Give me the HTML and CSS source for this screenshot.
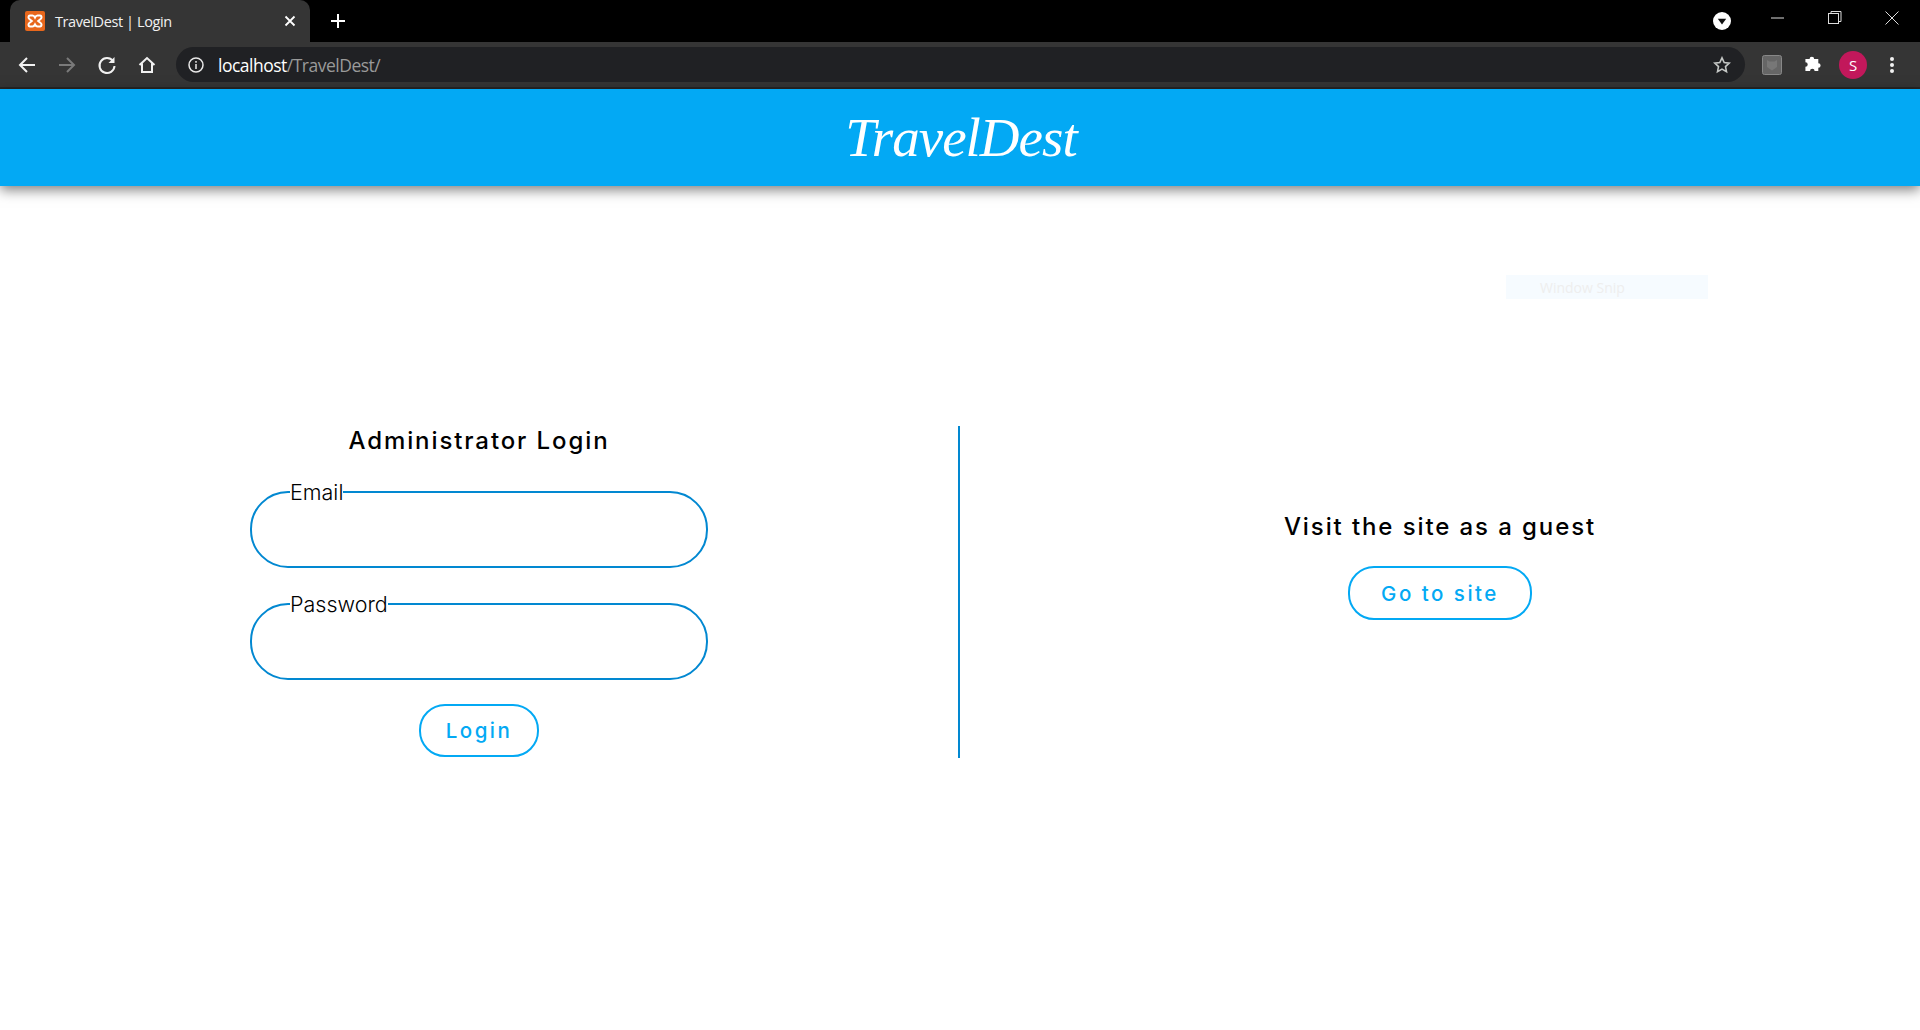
FILE: index.html

```html
<!DOCTYPE html>
<html lang="en">
<head>
    <meta charset="UTF-8">
    <title>TravelDest | Login</title>
    <meta name="viewport" content="width=device-width, initial-scale=1.0">
    <link rel="stylesheet" href="styles.css">
</head>
<body>
    <div class="browser">
        <div class="tabstrip">
            <div class="tab">
                <svg class="favicon" width="20" height="20" viewBox="0 0 20 20">
                    <rect width="20" height="20" rx="2" fill="#e8671c"/>
                    <path d="M5 4.500h2.500c1.300 0 2 1 2.500 2 .5-1 1.200-2 2.500-2H15c1 0 1.500 1 1.500 2s-.7 1.500-1.500 2l-1.800 1.500 1.800 1.500c.8.5 1.500 1 1.500 2s-.5 2-1.500 2h-2.500c-1.300 0-2-1-2.500-2-.5 1-1.200 2-2.500 2H5c-1 0-1.500-1-1.500-2s.7-1.500 1.500-2l1.800-1.500L5 8.500c-.8-.5-1.500-1-1.500-2s.5-2 1.500-2z" fill="none" stroke="#fff" stroke-width="2"/>
                </svg>
                <span class="tab-title">TravelDest | Login</span>
                <svg class="tab-close" width="12" height="12" viewBox="0 0 12 12">
                    <path d="M1.500 1.500l9 9M10.500 1.500l-9 9" stroke="#fff" stroke-width="1.800"/>
                </svg>
            </div>
            <svg class="new-tab" width="16" height="16" viewBox="0 0 16 16">
                <path d="M8 1v14M1 8h14" stroke="#fff" stroke-width="2"/>
            </svg>
            <div class="strip-right">
                <div class="tab-search">
                    <svg width="18" height="18" viewBox="0 0 18 18">
                        <circle cx="9" cy="9" r="9" fill="#fff"/>
                        <path d="M4.800 6.800h8.400L9 12.500z" fill="#111"/>
                    </svg>
                </div>
                <div class="win-btn">
                    <svg width="14" height="14" viewBox="0 0 14 14"><path d="M0 7h13" stroke="#ddd" stroke-width="1"/></svg>
                </div>
                <div class="win-btn">
                    <svg width="14" height="14" viewBox="0 0 14 14" fill="none" stroke="#ddd" stroke-width="1"><rect x=".5" y="2.500" width="10" height="10"/><path d="M3 2.500V.5h10v10h-2.500"/></svg>
                </div>
                <div class="win-btn">
                    <svg width="14" height="14" viewBox="0 0 14 14"><path d="M.5.5l13 13M13.500.5l-13 13" stroke="#ddd" stroke-width="1"/></svg>
                </div>
            </div>
        </div>
        <div class="toolbar">
            <svg class="tool" width="20" height="20" viewBox="0 0 20 20" fill="none" stroke="#f1f1f1" stroke-width="2"><path d="M18 10H3M10 3l-7 7 7 7"/></svg>
            <svg class="tool" width="20" height="20" viewBox="0 0 20 20" fill="none" stroke="#7a7a7a" stroke-width="2"><path d="M2 10h15M10 3l7 7-7 7"/></svg>
            <svg class="tool" width="20" height="20" viewBox="0 0 20 20" fill="none" stroke="#f1f1f1" stroke-width="2"><path d="M16 6a7.500 7.500 0 1 0 1.500 5"/><path d="M17.500 2v6h-6" fill="#f1f1f1" stroke="none"/></svg>
            <svg class="tool" width="20" height="20" viewBox="0 0 20 20" fill="none" stroke="#f1f1f1" stroke-width="2"><path d="M2.500 10L10 3l7.500 7M5 8.500V17h10V8.500"/></svg>
            <div class="omnibox">
                <svg width="16" height="16" viewBox="0 0 16 16" fill="none" stroke="#e8e8e8" stroke-width="1.500"><circle cx="8" cy="8" r="7"/><path d="M8 7v5M8 4v1.800"/></svg>
                <span class="url"><span class="url-host">localhost</span>/TravelDest/</span>
                <svg class="star" width="18" height="18" viewBox="0 0 18 18" fill="none" stroke="#c4c7c5" stroke-width="1.600"><path d="M9 1.800l2.200 4.700 5 .6-3.700 3.500 1 5L9 13.100l-4.500 2.500 1-5L1.800 7.100l5-.6z"/></svg>
            </div>
            <div class="toolbar-right">
                <svg class="ext-icon" width="20" height="20" viewBox="0 0 20 20">
                    <rect x=".5" y=".5" width="19" height="19" rx="2" fill="#666" stroke="#888"/>
                    <path d="M5 5l2.500 1.500h5L15 5v7l-5 3.500L5 12z" fill="#777"/>
                </svg>
                <svg class="puzzle" width="20" height="20" viewBox="0 0 20 20" fill="#fff">
                    <path d="M1 6h4.500a2.500 2.500 0 1 1 5 0H15v4.500a2.500 2.500 0 1 1 0 5V19h-4a2.500 2.500 0 1 0-5 0H1v-4.500a2.500 2.500 0 1 0 0-5z" transform="translate(1.500 -1.500) scale(.92)"/>
                </svg>
                <span class="avatar">S</span>
                <svg width="6" height="18" viewBox="0 0 6 18" fill="#f1f1f1"><circle cx="3" cy="3" r="2"/><circle cx="3" cy="9" r="2"/><circle cx="3" cy="15" r="2"/></svg>
            </div>
        </div>
    </div>

    <header class="site-header">
        <h1 class="brand">TravelDest</h1>
    </header>

    <div class="snip"><span>Window Snip</span></div>

    <main class="login-page">
        <section class="admin-login">
            <h2>Administrator Login</h2>
            <form class="login-form">
                <fieldset class="field">
                    <legend>Email</legend>
                    <input type="email" aria-label="Email">
                </fieldset>
                <fieldset class="field">
                    <legend>Password</legend>
                    <input type="password" aria-label="Password">
                </fieldset>
                <button type="button" class="btn btn-login">Login</button>
            </form>
        </section>
        <section class="guest">
            <h2>Visit the site as a guest</h2>
            <a class="btn btn-guest" href="#">Go to site</a>
        </section>
    </main>
</body>
</html>
```

FILE: styles.css

```css
* {
    box-sizing: border-box;
}
html, body {
    height: 100%;
}
body {
    margin: 0;
    overflow: hidden;
    background: #fff;
    font-family: Inter, "Open Sans", sans-serif;
    color: #000;
}

/* browser chrome */
.tabstrip {
    height: 42px;
    background: #000;
    display: flex;
    align-items: flex-end;
    padding-left: 10px;
}
.tab {
    width: 300px;
    height: 42px;
    background: #353535;
    border-radius: 10px 10px 0 0;
    display: flex;
    align-items: center;
    padding: 0 14px 0 15px;
}
.favicon {
    flex: none;
    margin-right: 10px;
}
.tab-title {
    flex: 1;
    color: #f1f1f1;
    font: 14.500px "Open Sans", sans-serif;
    letter-spacing: -0.4px;
}
.new-tab {
    margin: 0 0 13px 20px;
}
.strip-right {
    margin-left: auto;
    height: 42px;
    display: flex;
    align-items: flex-start;
}
.tab-search {
    margin: 12px 18px 0 0;
    height: 18px;
}
.win-btn {
    width: 57px;
    height: 36px;
    display: flex;
    align-items: center;
    justify-content: center;
}
.toolbar {
    height: 47px;
    background: #353535;
    border-bottom: 2px solid #262626;
    display: flex;
    align-items: center;
    padding: 0 15px 0 17px;
}
.tool {
    margin-right: 20px;
    flex: none;
}
.omnibox {
    flex: 1;
    height: 35px;
    background: #202124;
    border-radius: 18px;
    display: flex;
    align-items: center;
    padding: 0 14px 0 12px;
    margin-left: -1px;
}
.url {
    flex: 1;
    margin-left: 14px;
    color: #9a9a9a;
    font: 17.500px "Open Sans", sans-serif;
    letter-spacing: -0.5px;
}
.url-host {
    color: #fff;
}
.toolbar-right {
    display: flex;
    align-items: center;
    margin-left: 17px;
    padding-right: 10px;
}
.puzzle {
    margin: 0 16px 0 21px;
}
.avatar {
    width: 28px;
    height: 28px;
    margin-right: 22px;
    border-radius: 50%;
    background: #c2185b;
    color: #fff;
    font: 15px "Open Sans", sans-serif;
    display: flex;
    align-items: center;
    justify-content: center;
}

/* site */
.site-header {
    height: 97px;
    background: #03a9f4;
    box-shadow: 0 4px 12px rgba(0, 0, 0, 0.5);
    display: flex;
    align-items: center;
    justify-content: center;
}
.brand {
    margin: 0 0 0 2px;
    color: #fff;
    font: italic 400 55px "Liberation Serif", serif;
    letter-spacing: -1px;
}
.snip {
    position: absolute;
    left: 1506px;
    top: 275px;
    width: 202px;
    height: 24px;
    background: #f6fbff;
    color: #eeeeee;
    font: 14px "Open Sans", sans-serif;
    line-height: 26px;
    padding-left: 34px;
}
.login-page {
    display: flex;
    padding-top: 240px;
}
.admin-login {
    width: 958px;
    height: 332px;
    display: flex;
    flex-direction: column;
    align-items: center;
}
.guest {
    flex: 1;
    height: 332px;
    border-left: 2px solid #0288d1;
    display: flex;
    flex-direction: column;
    align-items: center;
    padding-top: 86px;
}
h2 {
    margin: 0;
    font-size: 24px;
    font-weight: 500;
    line-height: 30px;
    letter-spacing: 1.900px;
}
.login-form {
    display: flex;
    flex-direction: column;
    align-items: center;
    margin-top: 23px;
}
.field {
    width: 458px;
    height: 89px;
    margin: 0 0 23px;
    padding: 0 38px;
    border: 2px solid #0288d1;
    border-radius: 38px;
}
.field legend {
    padding: 0;
    font-size: 21.500px;
    font-weight: 300;
    line-height: 26px;
}
.field input {
    display: block;
    width: 100%;
    height: 60px;
    border: none;
    outline: none;
    background: transparent;
}
.btn {
    display: flex;
    align-items: center;
    justify-content: center;
    background: #fff;
    border: 2px solid #03a9f4;
    border-radius: 26px;
    color: #03a9f4;
    font-family: Inter, "Open Sans", sans-serif;
    font-size: 20.500px;
    font-weight: 500;
    letter-spacing: 2.500px;
    text-decoration: none;
    cursor: pointer;
}
.btn-login {
    width: 120px;
    height: 53px;
    margin-top: 1px;
}
.btn-guest {
    width: 184px;
    height: 54px;
    margin-top: 24px;
}
```
